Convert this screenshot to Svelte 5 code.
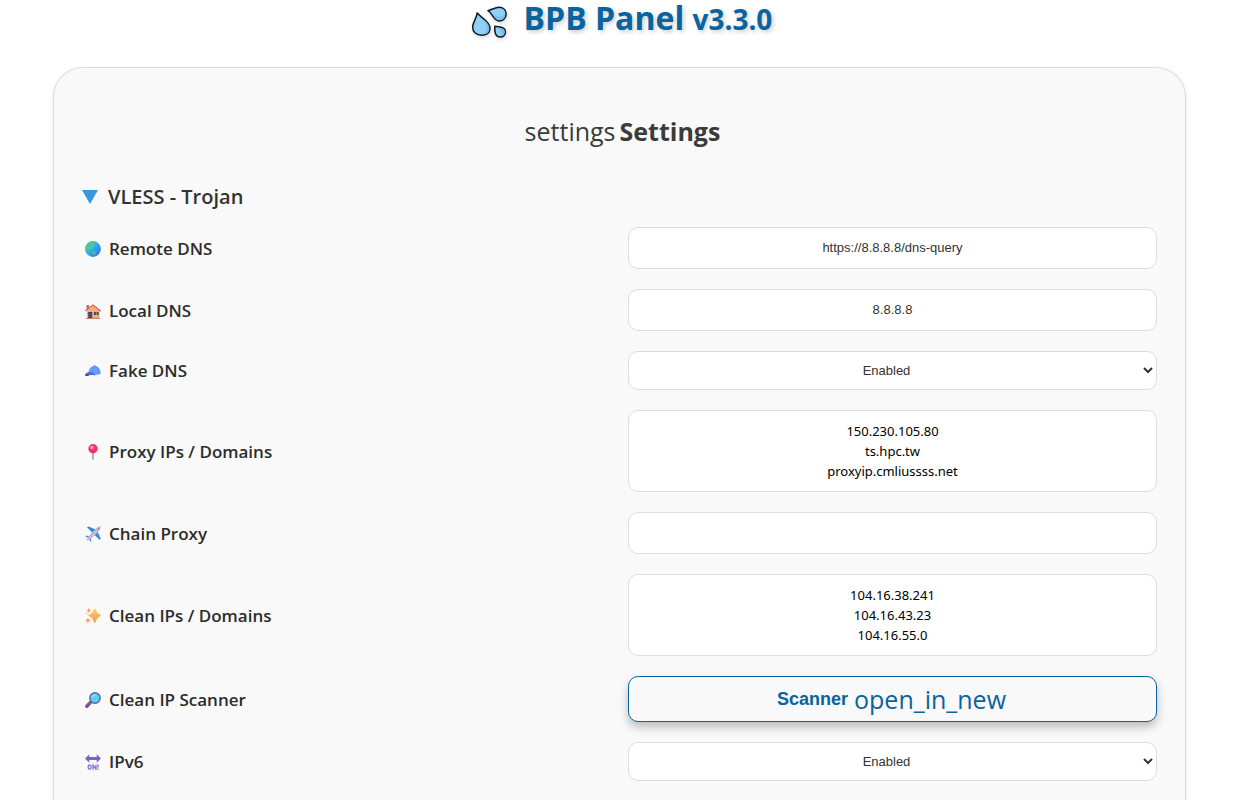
<script lang="ts">
  type Row = {
    id: string;
    label: string;
    icon: string;
    kind: 'text' | 'select' | 'area' | 'button';
    value: string;
  };

  const rows: Row[] = [
    { id: 'remote-dns', label: 'Remote DNS', icon: 'globe', kind: 'text', value: 'https://8.8.8.8/dns-query' },
    { id: 'local-dns', label: 'Local DNS', icon: 'house', kind: 'text', value: '8.8.8.8' },
    { id: 'fake-dns', label: 'Fake DNS', icon: 'cap', kind: 'select', value: 'Enabled' },
    { id: 'proxy-ips', label: 'Proxy IPs / Domains', icon: 'pin', kind: 'area', value: '150.230.105.80\nts.hpc.tw\nproxyip.cmliussss.net' },
    { id: 'chain-proxy', label: 'Chain Proxy', icon: 'plane', kind: 'text', value: '' },
    { id: 'clean-ips', label: 'Clean IPs / Domains', icon: 'sparkles', kind: 'area', value: '104.16.38.241\n104.16.43.23\n104.16.55.0' },
    { id: 'scanner', label: 'Clean IP Scanner', icon: 'lens', kind: 'button', value: 'Scanner' },
    { id: 'ipv6', label: 'IPv6', icon: 'on', kind: 'select', value: 'Enabled' }
  ];
</script>

{#snippet glyph(name: string)}
  <svg class="glyph" viewBox="0 0 16 16" aria-hidden="true">
    {#if name === 'globe'}
      <defs>
        <linearGradient id="sea" x1="0" y1="0" x2="1" y2="1">
          <stop offset="0" stop-color="#3cb6f5" /><stop offset=".45" stop-color="#27aef6" /><stop offset="1" stop-color="#4b62d8" />
        </linearGradient>
      </defs>
      <circle cx="8" cy="8" r="7.9" fill="url(#sea)" />
      <path d="M1.3 4Q4 .4 8 .3q1.600.2 2 1.100l-1 1.600 1 1-1.500 1.500.4 1.500-1.900.6L6 8.400l-1.300.6.6 1.500-1.500-.5L2.500 9 1 9 .2 7.500Q.3 5.600 1.300 4Z" fill="#52c49a" />
      <path d="M7 10.300l2.500-.3 1.600 1.600-.8 1.800-2.800.2-1-1.700ZM3 10.500l1.700.7-.6 1.500-1.500-.6ZM12.500 9l1.300.6-.7 1Z" fill="#41bba0" />
    {:else if name === 'house'}
      <path d="M1.500 2H4V6H1.500Z" fill="#a9775f" />
      <path d="M2 8 8 3 14.500 8V15.700H2Z" fill="#eaae83" />
      <path d="M.4 8.100 8 2 15.700 8.200" fill="none" stroke="#e65b3e" stroke-width="1.300" />
      <path d="M3.200 9h4V15.500h-4Z" fill="#4b3c56" />
      <path d="M3.200 11h4M3.200 13.300h4" stroke="#87677a" stroke-width=".6" />
      <rect x="9" y="9" width="4.600" height="3" fill="#4e405a" />
      <path d="M11.300 9v3" stroke="#e8c3a0" stroke-width=".7" />
      <path d="M1 15.500h14" stroke="#c28265" />
    {:else if name === 'cap'}
      <path d="M3.600 9.300C3.800 5.300 6.300 2.800 9.500 2.900c3.800 0 6.400 3.400 6.200 7.900-2.400.9-4.200 1.100-6.200 1.100Z" fill="#6c9df8" />
      <path d="M9.500 3c-2 2-2.400 4.800-1.300 7.700M10 3c3.200 1.500 4.200 4.700 3.600 8.200" fill="none" stroke="#4680e4" stroke-width=".5" />
      <path d="M.3 11.500C1.600 8.700 5 8 10 11l.4 1.400c-3-.8-5.900-.6-8 .3C.8 13.100 0 12.500.3 11.500Z" fill="#4a70de" />
      <path d="M.3 11.600c1-.6 2.600-.4 4 .4-1.700.9-3.800 1.300-4 .300Z" fill="#38417f" />
      <circle cx="9.500" cy="2.800" r=".7" fill="#4d7eec" />
    {:else if name === 'pin'}
      <path d="M7.200 8h1.600v7.200L8 16l-.8-.8Z" fill="#a79bac" />
      <circle cx="8" cy="4.800" r="4.700" fill="#ef3369" />
      <circle cx="7" cy="3.500" r="2.100" fill="#fc7597" />
      <circle cx="6.700" cy="3" r=".8" fill="#ffc2d0" />
    {:else if name === 'plane'}
      <path d="M2 1.300l1.800-.9 8.400 3.900-3.500 3.900ZM14.700 14l.9-1.800-3.900-8.400-3.900 3.500Z" fill="#398ade" />
      <path d="M.3 10.500l1-.9 5.200 1.300-1.900 1.900ZM5.500 15.700l.9-1L5.100 9.500 3.200 11.400Z" fill="#4594e2" />
      <path d="M1.500 14.500c1.200-3.500 5.200-8 9.300-11.500C13 1 15 .1 15.600.4s0 2.500-2 4.800c-3.500 4.100-8 8.100-11.500 9.300Z" fill="#c3b4cb" />
      <path d="M4 12.500 12.600 4" stroke="#d3c8da" stroke-width="1" />
      <path d="M12.600 1.900l1.600 1.500" stroke="#54577f" stroke-width=".8" />
    {:else if name === 'sparkles'}
      <defs>
        <linearGradient id="gold" x1="0" y1="0" x2="0" y2="1"><stop stop-color="#ffd052" /><stop offset="1" stop-color="#f59466" /></linearGradient>
      </defs>
      <path d="M9.700.7Q10.800 5.800 15.800 7.500 10.800 9.200 9.700 14.800 8.600 9.200 3.600 7.500 8.600 5.800 9.700.7Z" fill="url(#gold)" stroke="url(#gold)" stroke-linejoin="round" />
      <path d="M3.800.1q.4 2 2.400 2.500-2 .5-2.400 2.500Q3.400 3.100 1.400 2.600 3.400 2.100 3.800.1ZM2.900 9.600q.5 2.300 2.800 2.900-2.300.6-2.800 2.900Q2.400 13.100.1 12.500q2.300-.6 2.800-2.900ZM1 4q.2 1 1.200 1.200Q1.200 5.400 1 6.400" fill="#f89d66" />
    {:else if name === 'lens'}
      <path d="M1.800 14.200 6 9.900" stroke="#75518d" stroke-width="3.400" stroke-linecap="round" />
      <path d="M2 13.200 5.500 9.700" stroke="#9c639e" stroke-width="1" stroke-linecap="round" />
      <circle cx="10" cy="6" r="5.200" fill="#5bcdf1" stroke="#52699a" stroke-width="1.400" />
      <path d="M7.100 5.200Q7.800 3.300 9.900 3" fill="none" stroke="#a3eafa" stroke-width="1.200" stroke-linecap="round" />
    {:else}
      <path d="M0 4.500 4.300.2V3h7.400V.2L16 4.500 11.700 8.800V6H4.300v2.800Z" fill="#7c64c4" />
      <g fill="none" stroke="#8268bd" stroke-width="1.200">
        <rect x="3.200" y="11.100" width="2.800" height="4.100" rx="1.200" />
        <path d="M8 15.800v-4.700l3 4.100v-4.700M13 10.500v3.300M13 14.600v1.200" />
      </g>
    {/if}
  </svg>
{/snippet}

<main>
  <h1>
    <svg class="drops" viewBox="4 5 36 34" aria-hidden="true">
      <g fill="#90d0f6" stroke="#111820" stroke-width="1.500" stroke-linejoin="round">
        <path d="M10.200 12.900C13 17.500 23 20.500 23 28.500c0 4.500-4 6.700-8.300 6.700-5.300 0-9.100-3.200-9.100-8.200C5.600 22.500 9.700 18.500 10.200 12.900Z" />
        <path d="M20.900 10.700C25 9.800 28.500 7 32.500 7.200c4.200.3 6.800 3.300 6.600 7.200-.2 4-3.300 6.600-7 6.500-5.900-.2-6.200-7.700-11.200-10.200Z" />
        <path d="M27.800 26.200C31.500 27.400 38.500 26.300 38.500 32c0 3.200-2.400 5.200-5.300 5.100-5.200-.1-5.800-5.600-5.400-10.900Z" />
      </g>
      <g fill="#78bdec">
        <path d="M12 16C15.500 20 20.500 23 20 29c-.3 2.500-2 4.500-4.200 5.200 4-.2 6.400-2 6.400-5.800C22.200 22 15.500 20 12 16Z" />
        <path d="M25.500 13.800c2.500 1.700 4.500 3.300 8 3 2.500-.2 3.900-1.500 4.700-3 .3 3.900-2.300 6.500-6 6.300-3.700-.2-4.800-3.500-6.700-6.300Z" />
        <path d="M30 27.600c2.300 1.500 4.500 3.200 4.700 5.400.1 1.200-.1 2.400-.6 3.200 2-.2 3.700-1.900 3.700-4.200 0-4-4.200-3.700-7.800-4.400Z" />
      </g>
    </svg>
    <span>BPB Panel <small>v3.3.0</small></span>
  </h1>

  <form class="card" onsubmit={(e) => e.preventDefault()}>
    <h2><span class="symbol">settings</span><span>Settings</span></h2>
    <details open>
      <summary><svg class="arrow" viewBox="0 0 16 14" aria-hidden="true"><path d="M0 0h16L8 14Z" fill="#3498db" /></svg>VLESS - Trojan</summary>
      <div class="rows">
        {#each rows as row (row.id)}
          <div class="row">
            <label for={row.id}>{@render glyph(row.icon)}{row.label}</label>
            {#if row.kind === 'text'}
              <input id={row.id} type="text" value={row.value} />
            {:else if row.kind === 'select'}
              <select id={row.id}>
                <option>{row.value}</option>
                <option>Disabled</option>
              </select>
            {:else if row.kind === 'area'}
              <textarea id={row.id} rows="3" value={row.value}></textarea>
            {:else}
              <button id={row.id} type="button">{row.value}<span class="symbol">open_in_new</span></button>
            {/if}
          </div>
        {/each}
      </div>
    </details>
  </form>
</main>

<style>
  :global(body) {
    margin: 0;
    background: #fff;
  }
  main {
    box-sizing: border-box;
    min-height: 100vh;
    display: flex;
    flex-direction: column;
    padding: 0 51px 0 53px;
    font-family: 'Open Sans', 'Noto Sans', sans-serif;
    color: #333;
  }
  h1 {
    display: flex;
    justify-content: center;
    align-items: flex-end;
    gap: 17px;
    margin: 0 0 28px;
    padding-left: 4px;
    color: #09639f;
    font-size: 32px;
    line-height: 35px;
    text-shadow: 2px 2px 4px rgba(0, 0, 0, 0.2);
  }
  h1 span {
    padding-bottom: 4px;
  }
  small {
    font-size: 28px;
    line-height: 1;
  }
  .drops {
    width: 36px;
    height: 34px;
    filter: drop-shadow(1px 2px 2px rgba(0, 0, 0, 0.15));
  }
  .card {
    flex: 1;
    padding: 43px 28px 18px;
    background: #f9f9f9;
    border: 1px solid #ddd;
    border-bottom: 0;
    border-radius: 30px 30px 0 0;
    box-shadow: 0 2px 4px rgba(0, 0, 0, 0.1);
  }
  h2 {
    display: flex;
    justify-content: center;
    gap: 4px;
    margin: 0 0 31px;
    padding-left: 6px;
    font-size: 25px;
    line-height: 40px;
    color: #3b3b3b;
  }
  .symbol {
    font-weight: 400;
    font-size: 25px;
  }
  summary {
    display: flex;
    align-items: center;
    gap: 10px;
    line-height: 30px;
    font-size: 20px;
    font-weight: 600;
    list-style: none;
    cursor: pointer;
  }
  .arrow {
    width: 16px;
    height: 14px;
  }
  .rows {
    display: grid;
    gap: 20px;
    margin-top: 15px;
  }
  .row {
    display: grid;
    grid-template-columns: minmax(0, 1fr) minmax(0, 1fr);
    gap: 17px;
    align-items: center;
  }
  label {
    display: flex;
    align-items: center;
    gap: 8px;
    padding: 1px 0 0 3px;
    font-size: 17px;
    line-height: 24px;
    font-weight: 600;
    color: #2c2c2c;
  }
  .glyph {
    width: 16px;
    height: 16px;
  }
  input,
  select,
  textarea,
  button {
    box-sizing: border-box;
    display: block;
    width: 100%;
    margin: 0;
    border: 1px solid #ddd;
    border-radius: 10px;
    background: #fff;
    color: #333;
    font-family: 'Liberation Sans', Arial, sans-serif;
    font-size: 13px;
    text-align: center;
  }
  input {
    height: 42px;
    padding: 10px 10px 12px;
  }
  select {
    height: 39px;
    padding: 10px 0;
  }
  textarea {
    height: 82px;
    padding: 10px;
    resize: none;
    overflow: hidden;
    color: #000;
    font-family: 'Noto Sans', sans-serif;
    line-height: 20px;
  }
  button {
    display: flex;
    justify-content: center;
    align-items: center;
    gap: 6px;
    height: 46px;
    padding: 0 2px 0 0;
    border-color: #09639f;
    background: #f9f9f9;
    color: #09639f;
    font-size: 18px;
    font-weight: 700;
    box-shadow: 0 5px 10px rgba(0, 0, 0, 0.25);
    cursor: pointer;
  }
  button .symbol {
    font-family: 'Open Sans', 'Noto Sans', sans-serif;
  }
</style>
